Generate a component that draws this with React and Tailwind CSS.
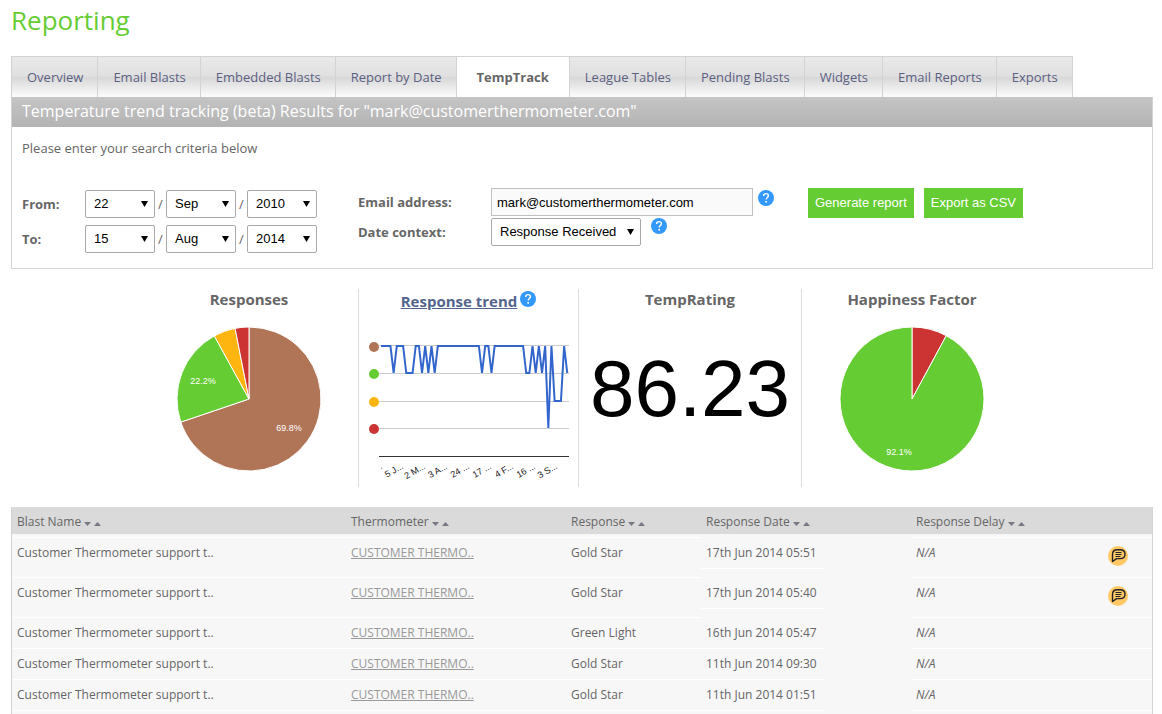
import { useState } from 'react';
import clsx from 'clsx';

const TABS = [
  'Overview',
  'Email Blasts',
  'Embedded Blasts',
  'Report by Date',
  'TempTrack',
  'League Tables',
  'Pending Blasts',
  'Widgets',
  'Email Reports',
  'Exports',
];

const DAYS = Array.from({ length: 31 }, (_, i) => String(i + 1));
const MONTHS = ['Jan', 'Feb', 'Mar', 'Apr', 'May', 'Jun', 'Jul', 'Aug', 'Sep', 'Oct', 'Nov', 'Dec'];
const YEARS = ['2010', '2011', '2012', '2013', '2014'];

const COLORS = { gold: '#b07557', green: '#66cc33', yellow: '#ffb510', red: '#cc3333' };

const RESPONSES = [
  { value: 69.8, color: COLORS.gold },
  { value: 22.2, color: COLORS.green },
  { value: 4.9, color: COLORS.yellow },
  { value: 3.1, color: COLORS.red },
];

const HAPPINESS = [
  { value: 7.9, color: COLORS.red },
  { value: 92.1, color: COLORS.green },
];

// One digit per response: 0 gold, 1 green, 2 yellow, 3 red
const TREND = '000010001110010101' + '00000000000000' + '1001' + '0000000000' + '11010103022201';
const TREND_Y = [27, 54, 82, 109];
const TREND_LABELS = ['5 J...', '2 M...', '3 A...', '24 ...', '17 ...', '4 F...', '16 ...', '3 S...'];

const ROWS = [
  { response: 'Gold Star', date: '17th Jun 2014 05:51', comment: true },
  { response: 'Gold Star', date: '17th Jun 2014 05:40', comment: true },
  { response: 'Green Light', date: '16th Jun 2014 05:47' },
  { response: 'Gold Star', date: '11th Jun 2014 09:30' },
  { response: 'Gold Star', date: '11th Jun 2014 01:51' },
];

function Select({ label, id, options, defaultValue, className }) {
  return (
    <div className={clsx('relative', className)}>
      <select
        id={id}
        aria-label={label}
        defaultValue={defaultValue}
        className="h-7 w-full appearance-none rounded-xs border border-[#a9a9a9] bg-white pl-2 font-['Liberation_Sans',Arial,sans-serif] text-[13px] text-black"
      >
        {options.map((o) => (
          <option key={o}>{o}</option>
        ))}
      </select>
      <svg className="pointer-events-none absolute top-[11px] right-[7px]" width="7" height="6" viewBox="0 0 7 6">
        <path d="M0 0h7L3.5 6z" fill="#000" />
      </svg>
    </div>
  );
}

function DateRow({ label, day, month, year }) {
  return (
    <div className="flex items-center">
      <span className="w-[63px] font-bold">{label}:</span>
      <Select label={`${label} day`} options={DAYS} defaultValue={day} className="w-[70px]" />
      <span className="w-[11px] text-center">/</span>
      <Select label={`${label} month`} options={MONTHS} defaultValue={month} className="w-[70px]" />
      <span className="w-[11px] text-center">/</span>
      <Select label={`${label} year`} options={YEARS} defaultValue={year} className="w-[70px]" />
    </div>
  );
}

function Help() {
  return (
    <svg width="16" height="16" viewBox="0 0 16 16" role="img" aria-label="Help" className="shrink-0">
      <circle cx="8" cy="8" r="8" fill="#3399ff" />
      <path d="M5.6 6.1c0-1.6 1-2.5 2.4-2.5s2.4.9 2.4 2.1c0 1.8-2.2 1.9-2.2 3.7" fill="none" stroke="#fff" strokeWidth="1.4" />
      <rect x="7.4" y="11" width="1.6" height="1.6" fill="#fff" />
    </svg>
  );
}

function Pie({ data, label, children }) {
  let start = 0;
  const point = (pct) => {
    const a = (pct / 100) * Math.PI * 2;
    return `${80 + 72 * Math.sin(a)} ${80 - 72 * Math.cos(a)}`;
  };
  return (
    <svg width="160" height="160" viewBox="0 0 160 160" role="img" aria-label={label} className="mt-2.5">
      {data.map((s) => {
        const from = start;
        start += s.value;
        return (
          <path
            key={s.color}
            d={`M80 80L${point(from)}A72 72 0 ${s.value > 50 ? 1 : 0} 1 ${point(start)}Z`}
            fill={s.color}
            stroke="#fff"
            strokeWidth="1"
          />
        );
      })}
      <g fill="#fff" textAnchor="middle" className="font-['Liberation_Sans',Arial,sans-serif] text-[9px]">
        {children}
      </g>
    </svg>
  );
}

function TrendChart() {
  const points = TREND.split('').map((l, i) => `${22 + i * 3.157},${TREND_Y[l]}`).join(' ');
  return (
    <svg width="219" height="162" viewBox="0 0 219 162" role="img" aria-label="Response trend" className="mt-2.5">
      {[26, 54, 82, 109].map((y) => (
        <rect key={y} x="20" y={y} width="190" height="1" fill="#ccc" />
      ))}
      <rect x="20" y="137" width="190" height="1" fill="#333" />
      {Object.values(COLORS).map((c, i) => (
        <circle key={c} cx="15" cy={[28, 55, 83, 110][i]} r="5" fill={c} />
      ))}
      <polyline points={points} fill="none" stroke="#3366cc" strokeWidth="2" />
      <g fill="#222" textAnchor="end" className="font-['Liberation_Sans',Arial,sans-serif] text-[9px]">
        <text transform="translate(24 149) rotate(-30)">.</text>
        {TREND_LABELS.map((t, i) => (
          <text key={t} transform={`translate(${45 + i * 22} 149) rotate(-30)`}>{t}</text>
        ))}
      </g>
    </svg>
  );
}

function SortHeader({ children }) {
  return (
    <th className="px-[5px] pt-[5px] pb-0.5 text-left font-normal">
      <div className="flex items-center gap-[3px]">
        {children}
        <button type="button" aria-label={`Sort ${children} descending`} className="pt-[3px]">
          <svg width="7" height="4" viewBox="0 0 7 4"><path d="M0 0h7L3.5 4z" fill="#777783" /></svg>
        </button>
        <button type="button" aria-label={`Sort ${children} ascending`} className="pt-[3px]">
          <svg width="7" height="4" viewBox="0 0 7 4"><path d="M0 4h7L3.5 0z" fill="#777783" /></svg>
        </button>
      </div>
    </th>
  );
}

function CommentIcon() {
  return (
    <svg width="20" height="20" viewBox="0 0 20 20">
      <circle cx="10" cy="10" r="10" fill="#ffc966" />
      <path
        d="M4.500 15.500V8.500c0-3 2-4.700 5-4.700h2.600c2.900 0 4.900 1.700 4.900 4.400s-2 4.400-4.900 4.400H8.600z"
        fill="none"
        stroke="#222"
        strokeWidth="1.4"
        strokeLinejoin="round"
      />
      <path d="M7.500 6.500h6M7.500 8.500h6M7.500 10.500h5" stroke="#222" strokeWidth="1" />
    </svg>
  );
}

export default function App() {
  const [active, setActive] = useState('TempTrack');

  return (
    <div className="pr-[9px] pl-[11px] font-['Open_Sans',sans-serif] text-[13px] leading-5 text-[#666]">
      <h1 className="pt-[3px] pb-[19px] text-[26px] leading-[34px] text-[#66cc33]">Reporting</h1>

      {/* Tabs */}
      <nav className="flex w-fit border-t border-l border-[#d3d3d3]">
        {TABS.map((tab) => (
          <a
            key={tab}
            href="#"
            onClick={(e) => { e.preventDefault(); setActive(tab); }}
            className={clsx(
              'border-r border-[#d3d3d3] py-2.5 whitespace-nowrap',
              active === tab
                ? 'bg-white px-5 font-bold'
                : 'bg-[linear-gradient(#e9e9e9,#e0e0e0_46%,#d8d8d8_52%,#fdfdfd)] pr-3.5 pl-[15px] text-[#5b6083]'
            )}
          >
            {tab}
          </a>
        ))}
      </nav>

      {/* Search panel */}
      <section className="border-x border-b border-[#d3d3d3]">
        <h2 className="bg-linear-to-b from-[#c5c5c5] to-[#b3b3b3] px-2.5 pb-0.5 text-base leading-7 text-white">
          Temperature trend tracking (beta) Results for "mark@customerthermometer.com"
        </h2>
        <div className="px-2.5 pt-[11px] pb-[15px]">
          <p>Please enter your search criteria below</p>
          <form className="mt-[30px] flex items-start" onSubmit={(e) => e.preventDefault()}>
            <div className="flex w-[336px] flex-col gap-[7px] pt-0.5">
              <DateRow label="From" day="22" month="Sep" year="2010" />
              <DateRow label="To" day="15" month="Aug" year="2014" />
            </div>
            <div className="flex w-[450px] flex-col gap-0.5">
              <div className="flex items-start gap-[5px]">
                <label htmlFor="email" className="w-32 pt-1 font-bold">Email address:</label>
                <input
                  id="email"
                  type="text"
                  defaultValue="mark@customerthermometer.com"
                  className="h-7 w-[262px] border border-[#c0c0c0] bg-[#fafafa] px-[5px] font-['Liberation_Sans',Arial,sans-serif] text-[13px] text-black"
                />
                <div className="pt-0.5"><Help /></div>
              </div>
              <div className="flex items-start gap-2.5">
                <label htmlFor="context" className="w-[123px] pt-1 font-bold">Date context:</label>
                <Select id="context" options={['Response Received', 'Blast Sent']} className="w-[150px]" />
                <Help />
              </div>
            </div>
            <div className="flex gap-2.5 font-['Liberation_Sans',Arial,sans-serif] text-[13px] text-white">
              <button type="submit" className="h-[30px] bg-[#66cc33] px-[7px]">Generate report</button>
              <button type="button" className="h-[30px] bg-[#66cc33] px-[7px]">Export as CSV</button>
            </div>
          </form>
        </div>
      </section>

      {/* Charts */}
      <section className="mt-5 flex justify-center text-[15px]">
        <div className="flex w-[219px] flex-col items-center border-r border-[#ddd] pb-2">
          <h3 className="font-bold">Responses</h3>
          <Pie data={RESPONSES} label="Responses">
            <text x="34" y="65">22.2%</text>
            <text x="120" y="112">69.8%</text>
          </Pie>
        </div>
        <div className="flex w-[220px] flex-col items-center border-r border-[#ddd]">
          <div className="flex h-5 items-start gap-[3px] pt-0.5">
            <a href="#" className="font-bold text-[#53658c] underline">Response trend</a>
            <Help />
          </div>
          <TrendChart />
        </div>
        <div className="flex w-[223px] flex-col items-center border-r border-[#ddd]">
          <h3 className="font-bold">TempRating</h3>
          <p className="mt-10 font-['Liberation_Sans',Arial,sans-serif] text-[80px] leading-[80px] text-black">86.23</p>
        </div>
        <div className="flex w-[222px] flex-col items-center pr-0.5">
          <h3 className="font-bold">Happiness Factor</h3>
          <Pie data={HAPPINESS} label="Happiness Factor">
            <text x="67" y="136">92.1%</text>
          </Pie>
        </div>
      </section>

      {/* Results */}
      <div className="mt-5 border-x border-[#d3d3d3] bg-[#f7f7f7] pb-[3px]">
        <table className="w-full table-fixed border-separate border-spacing-0 text-xs leading-5">
          <colgroup>
            <col className="w-[334px]" />
            <col className="w-[220px]" />
            <col className="w-[135px]" />
            <col className="w-[210px]" />
            <col />
            <col className="w-[49px]" />
          </colgroup>
          <thead>
            <tr className="bg-[#dadada]">
              <SortHeader>Blast Name</SortHeader>
              <SortHeader>Thermometer</SortHeader>
              <SortHeader>Response</SortHeader>
              <SortHeader>Response Date</SortHeader>
              <SortHeader>Response Delay</SortHeader>
              <th />
            </tr>
          </thead>
          <tbody>
            <tr className="h-1">
              <td colSpan={3} className="border-b border-white" />
              <td />
              <td colSpan={2} className="border-b border-white" />
            </tr>
            {ROWS.map((row) => (
              <tr key={row.date} className="align-top">
                <td className="border-b border-white p-[5px]">Customer Thermometer support t..</td>
                <td className="border-b border-white p-[5px]">
                  <a href="#" className="text-[#999] underline">CUSTOMER THERMO..</a>
                </td>
                <td className="border-b border-white p-[5px]">{row.response}</td>
                <td>
                  <div className="w-[123px] border-b border-white p-[5px] whitespace-nowrap">{row.date}</div>
                </td>
                <td className="border-b border-white p-[5px] italic">N/A</td>
                <td className="border-b border-white">
                  {row.comment && (
                    <button type="button" aria-label="View comment" className="mt-2 mb-[11px] ml-[5px] block">
                      <CommentIcon />
                    </button>
                  )}
                </td>
              </tr>
            ))}
          </tbody>
        </table>
      </div>
    </div>
  );
}
